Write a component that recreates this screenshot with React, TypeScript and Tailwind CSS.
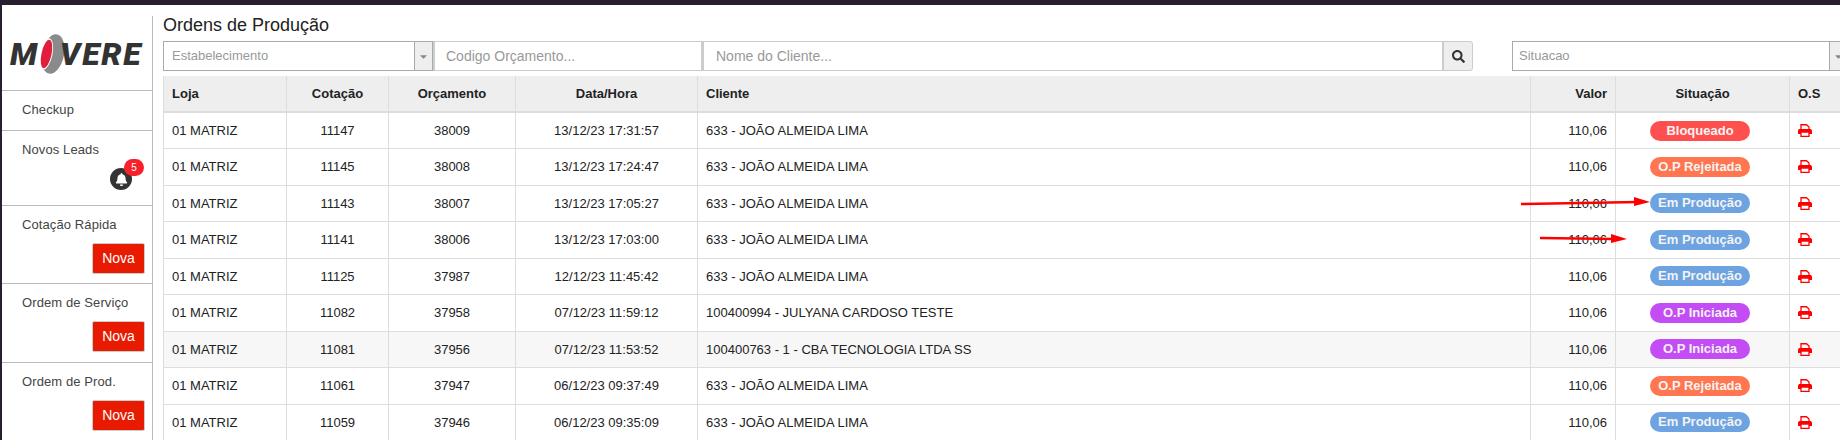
import { FaBell, FaCaretDown, FaSearch } from "react-icons/fa";

const rows = [
  ["11147", "38009", "13/12/23 17:31:57", "633 - JOÃO ALMEIDA LIMA", "Bloqueado"],
  ["11145", "38008", "13/12/23 17:24:47", "633 - JOÃO ALMEIDA LIMA", "O.P Rejeitada"],
  ["11143", "38007", "13/12/23 17:05:27", "633 - JOÃO ALMEIDA LIMA", "Em Produção"],
  ["11141", "38006", "13/12/23 17:03:00", "633 - JOÃO ALMEIDA LIMA", "Em Produção"],
  ["11125", "37987", "12/12/23 11:45:42", "633 - JOÃO ALMEIDA LIMA", "Em Produção"],
  ["11082", "37958", "07/12/23 11:59:12", "100400994 - JULYANA CARDOSO TESTE", "O.P Iniciada"],
  ["11081", "37956", "07/12/23 11:53:52", "100400763 - 1 - CBA TECNOLOGIA LTDA SS", "O.P Iniciada"],
  ["11061", "37947", "06/12/23 09:37:49", "633 - JOÃO ALMEIDA LIMA", "O.P Rejeitada"],
  ["11059", "37946", "06/12/23 09:35:09", "633 - JOÃO ALMEIDA LIMA", "Em Produção"],
];

const badgeColors: Record<string, string> = {
  Bloqueado: "bg-[#ff5050]",
  "O.P Rejeitada": "bg-[#ff7650]",
  "Em Produção": "bg-[#6da3e0]",
  "O.P Iniciada": "bg-[#c34cf5]",
};

function Logo() {
  return (
    <div className="flex h-[75px] items-center border-b border-[#bbb] pl-[8px] pt-[1px] font-['Roboto',sans-serif] text-[32px] font-black italic leading-none tracking-[0.6px] text-[#333]">
      <span>M</span>
      <svg width="30" height="42" viewBox="0 0 30 42" className="-ml-[2px] -mr-[6px] shrink-0">
        <ellipse cx="17" cy="21" rx="11" ry="20" fill="#8a8a8a" transform="rotate(12 17 21)" />
        <ellipse cx="10" cy="21" rx="6.5" ry="16" fill="#fff" transform="rotate(12 10 21)" />
        <ellipse cx="10.5" cy="21" rx="5" ry="14.5" fill="#e01e3c" transform="rotate(12 10.5 21)" />
      </svg>
      <span className="tracking-[1.8px]">VERE</span>
    </div>
  );
}

function SideItem({ label, height, children }: { label: string; height: string; children?: React.ReactNode }) {
  return (
    <div className={`flex flex-col border-b border-[#bbb] pl-[20px] pr-2 pt-[9px] ${height}`}>
      <span className="text-[13px] leading-[20px] tracking-[0.1px] text-[#444]">{label}</span>
      {children}
    </div>
  );
}

function NovaButton() {
  return (
    <button className="mt-[8px] ml-auto mr-[-1px] h-[31px] w-[53px] rounded-[2px] border border-[#ccc] bg-[#e81a00] text-[14px] text-white">
      Nova
    </button>
  );
}

function PrintIcon() {
  return (
    <svg width="14" height="13" viewBox="0 0 14 13" className="block">
      <path d="M3 5V.75h5.5L11 3v2" fill="none" stroke="#f00" strokeWidth="1.3" />
      <path d="M0 6.5 1 5h12l1 1.5V10h-3V8H3v2H0z" fill="#f00" />
      <path d="M3 8h8v4.3H3z" fill="#fff" stroke="#f00" strokeWidth="1.3" />
    </svg>
  );
}

function Arrow({ className, width, y1, y2 }: { className: string; width: number; y1: number; y2: number }) {
  return (
    <svg className={`absolute ${className}`} width={width} height="14" viewBox={`0 0 ${width} 14`}>
      <line x1="0" y1={y1} x2={width - 12} y2={y2} stroke="#f00" strokeWidth="2.5" />
      <polygon points={`${width - 16},${y2 - 5} ${width},${y2} ${width - 16},${y2 + 4}`} fill="#f00" />
    </svg>
  );
}

export default function App() {
  return (
    <div className="relative flex h-[440px] w-[1840px] flex-col overflow-hidden bg-white font-['Liberation_Sans',Arial,sans-serif]">
      <div className="h-[5px] shrink-0 bg-[#291d30]" />
      <div className="flex min-h-0 flex-1 border-l-2 border-[#291d30]">
        <aside className="mt-[11px] w-[151px] shrink-0 border-r border-[#bbb]">
          <Logo />
          <SideItem label="Checkup" height="h-[40px]" />
          <SideItem label="Novos Leads" height="h-[75px]">
            <div className="relative ml-auto mr-[12px] mt-[8px] flex h-[22px] w-[22px] items-center justify-center rounded-full bg-[#333]">
              <FaBell className="text-[13px] text-white" />
              <span className="absolute -right-[12px] -top-[9px] flex h-[17px] w-[20px] items-center justify-center rounded-full bg-[#f8212b] text-[10px] text-white">
                5
              </span>
            </div>
          </SideItem>
          <SideItem label="Cotação Rápida" height="h-[78px]">
            <NovaButton />
          </SideItem>
          <SideItem label="Ordem de Serviço" height="h-[79px]">
            <NovaButton />
          </SideItem>
          <SideItem label="Ordem de Prod." height="h-[78px]">
            <NovaButton />
          </SideItem>
        </aside>

        <main className="min-w-0 flex-1 pl-[10px]">
          <h1 className="h-[36px] pt-[8px] text-[18px] leading-[24px] text-[#222]">Ordens de Produção</h1>

          <div className="flex h-[30px] items-stretch text-[14px] text-[#999]">
            <div className="flex w-[270px] shrink-0 items-center justify-between border border-[#aaa] text-[13px]">
              <span className="pl-[8px]">Estabelecimento</span>
              <span className="flex h-full w-[18px] items-center justify-center border-l border-[#aaa] bg-[#eee] text-[#888]">
                <FaCaretDown className="text-[11px]" />
              </span>
            </div>
            <div className="flex w-[269px] shrink-0 items-center border border-l-2 border-[#ccc] pl-[11px]">Codigo Orçamento...</div>
            <div className="flex w-[741px] shrink-0 items-center border border-l-2 border-[#ccc] pl-[12px]">Nome do Cliente...</div>
            <button className="flex w-[30px] shrink-0 items-center justify-center rounded-r-[3px] border border-[#ccc] bg-[#eee] text-[#333]">
              <FaSearch className="text-[13px]" />
            </button>
            <div className="ml-[39px] flex w-[336px] shrink-0 items-center justify-between border border-[#aaa] text-[13px]">
              <span className="pl-[6px]">Situacao</span>
              <span className="flex h-full w-[18px] items-center justify-center border-l border-[#aaa] bg-[#eee] text-[#888]">
                <FaCaretDown className="text-[11px]" />
              </span>
            </div>
          </div>

          <table className="mt-[5px] w-[1677px] table-fixed border-collapse text-[13px] text-[#222]">
            <colgroup>
              <col className="w-[123px]" />
              <col className="w-[102px]" />
              <col className="w-[127px]" />
              <col className="w-[182px]" />
              <col className="w-[833px]" />
              <col className="w-[85px]" />
              <col className="w-[174px]" />
              <col className="w-[51px]" />
            </colgroup>
            <thead>
              <tr className="h-[36px] bg-[#eee] font-bold">
                <th className="border-x border-b-2 border-[#ddd] px-2 text-left">Loja</th>
                <th className="border-x border-b-2 border-[#ddd] px-2 text-center">Cotação</th>
                <th className="border-x border-b-2 border-[#ddd] px-2 text-center">Orçamento</th>
                <th className="border-x border-b-2 border-[#ddd] px-2 text-center">Data/Hora</th>
                <th className="border-x border-b-2 border-[#ddd] px-2 text-left">Cliente</th>
                <th className="border-x border-b-2 border-[#ddd] px-2 text-right">Valor</th>
                <th className="border-x border-b-2 border-[#ddd] px-2 text-center">Situação</th>
                <th className="border-x border-b-2 border-[#ddd] px-2 text-left">O.S</th>
              </tr>
            </thead>
            <tbody>
              {rows.map((row) => (
                <tr key={row[0]} className={`h-[36.5px] ${row[0] === "11081" ? "bg-[#f7f7f7]" : ""}`}>
                  <td className="border border-[#ddd] px-2">01 MATRIZ</td>
                  <td className="border border-[#ddd] px-2 text-center">{row[0]}</td>
                  <td className="border border-[#ddd] px-2 text-center">{row[1]}</td>
                  <td className="border border-[#ddd] px-2 text-center">{row[2]}</td>
                  <td className="border border-[#ddd] px-2">{row[3]}</td>
                  <td className="border border-[#ddd] px-2 text-right">110,06</td>
                  <td className="border border-[#ddd] pl-[34px]">
                    <span className={`block h-[20px] w-[100px] rounded-full text-center text-[13px] font-bold leading-[19px] text-[#f3f3f3] ${badgeColors[row[4]]}`}>
                      {row[4]}
                    </span>
                  </td>
                  <td className="border border-[#ddd] px-2">
                    <PrintIcon />
                  </td>
                </tr>
              ))}
            </tbody>
          </table>
        </main>
      </div>

      <Arrow className="left-[1521px] top-[196px]" width={129} y1={8} y2={6} />
      <Arrow className="left-[1540px] top-[232px]" width={87} y1={6} y2={7} />
    </div>
  );
}
